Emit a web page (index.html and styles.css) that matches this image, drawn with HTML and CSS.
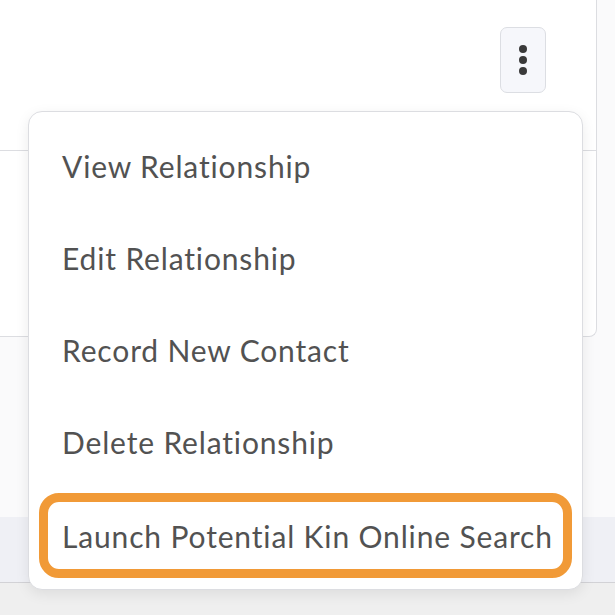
FILE: index.html
```html
<!DOCTYPE html>
<html lang="en">
<head>
  <meta charset="UTF-8">
  <title>Relationship actions</title>
  <meta name="viewport" content="width=device-width, initial-scale=1.0">
  <link rel="stylesheet" href="styles.css">
</head>
<body>

  <div class="page">
    <div class="card">
      <div class="row row-top">
        <button class="kebab" aria-label="More actions">
          <span class="dot"></span>
          <span class="dot"></span>
          <span class="dot"></span>
        </button>
      </div>
      <div class="row row-next"></div>
    </div>
    <div class="spacer"></div>
    <div class="band"></div>
  </div>

  <ul class="menu">
    <li class="menu-item">View Relationship</li>
    <li class="menu-item">Edit Relationship</li>
    <li class="menu-item">Record New Contact</li>
    <li class="menu-item">Delete Relationship</li>
    <li class="menu-item highlight">Launch Potential Kin Online Search</li>
  </ul>

</body>
</html>
```

FILE: styles.css
```css
body { margin: 0; background: #efefef; font-family: Lato, "Open Sans", sans-serif; }

.page { background: #fafafb; border-bottom: 1px solid #d2d2d6; }
.card { width: 596px; background: #fff; border-right: 1px solid #dcdde1; border-bottom: 1px solid #dcdde1; border-bottom-right-radius: 8px; }
.row-top { height: 151px; border-bottom: 1px solid #dcdde1; display: flex; justify-content: flex-end; align-items: flex-start; padding: 27px 50px 0 0; box-sizing: border-box; }
.row-next { height: 185px; }
.spacer { height: 180px; }
.band { height: 65px; background: #eff0f5; }

.kebab { width: 46px; height: 66px; padding: 0; background: #f6f7fb; border: 1.5px solid #dcdee3; border-radius: 7px; display: flex; flex-direction: column; align-items: center; justify-content: center; gap: 3px; }
.dot { width: 8px; height: 8px; border-radius: 50%; background: #3a3a3a; }

.menu { position: absolute; top: 111px; left: 28px; width: 555px; height: 479px; box-sizing: border-box; margin: 0; padding: 8px 0 8px; list-style: none; background: #fff; border: 1px solid #dcdde1; border-radius: 14px; box-shadow: 0 4px 14px rgba(0, 0, 0, 0.08); }
.menu-item { height: 92px; display: flex; align-items: center; padding-left: 33px; font-size: 30px; letter-spacing: 0.85px; color: #525252; }
.menu-item.highlight { height: 85px; margin: 5px 10px 0; padding-left: 14px; border: 9px solid #f19a37; border-radius: 20px; box-sizing: border-box; }
```
